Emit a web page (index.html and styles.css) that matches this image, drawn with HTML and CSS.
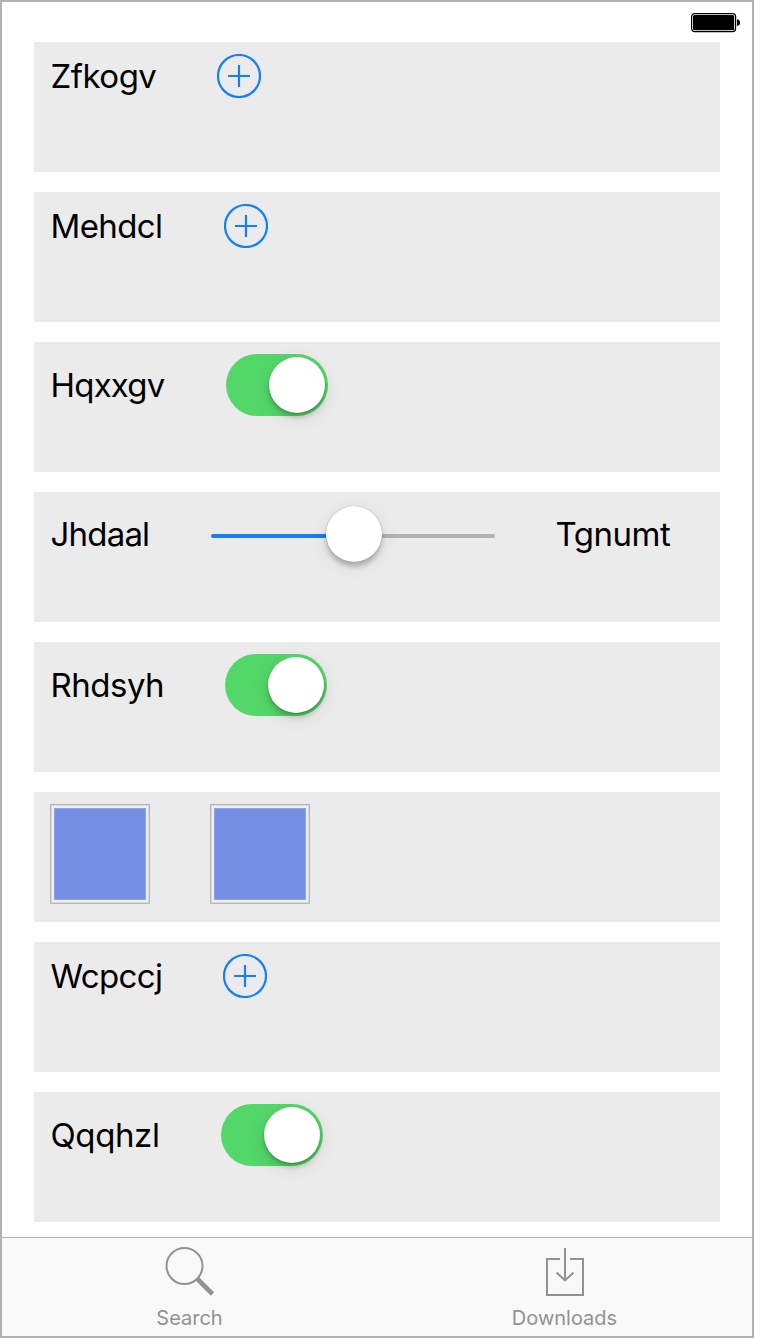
FILE: index.html
```html
<!DOCTYPE html>
<html lang="en">
<head>
<meta charset="utf-8">
<title>Search</title>
<link rel="stylesheet" href="styles.css">
</head>
<body>
<div class="phone">
  <header class="status">
    <svg class="battery" width="50" height="20" viewBox="0 0 50 20">
      <rect x="0.6" y="0.6" width="44" height="18" rx="3" fill="#fff" stroke="#000" stroke-width="1.2"/>
      <rect x="2" y="2" width="41.2" height="15.2" rx="1.5" fill="#000"/>
      <path d="M46 6.2Q49 6.5 49 9.6Q49 12.7 46 13Z" fill="#000"/>
    </svg>
  </header>
  <main class="rows">
    <section class="row"><div class="line"><span class="label w-zf">Zfkogv</span><svg class="plus" viewBox="0 0 44 44"><circle cx="22" cy="22" r="21"/><path d="M22 11V33M11 22H33"/></svg></div></section>
    <section class="row"><div class="line"><span class="label w-me">Mehdcl</span><svg class="plus" viewBox="0 0 44 44"><circle cx="22" cy="22" r="21"/><path d="M22 11V33M11 22H33"/></svg></div></section>
    <section class="row"><div class="line"><span class="label w-hq">Hqxxgv</span><div class="toggle"><div class="thumb"></div></div></div></section>
    <section class="row"><div class="line slider-line"><span class="label w-jh">Jhdaal</span><div class="slider"><div class="filled"></div><div class="thumb"></div><div class="rest"></div></div><span class="label w-tg">Tgnumt</span></div></section>
    <section class="row"><div class="line"><span class="label w-rh">Rhdsyh</span><div class="toggle"><div class="thumb"></div></div></div></section>
    <section class="row"><div class="line"><div class="swatch"></div><div class="swatch"></div></div></section>
    <section class="row"><div class="line"><span class="label w-wc">Wcpccj</span><svg class="plus" viewBox="0 0 44 44"><circle cx="22" cy="22" r="21"/><path d="M22 11V33M11 22H33"/></svg></div></section>
    <section class="row"><div class="line"><span class="label w-qq">Qqqhzl</span><div class="toggle"><div class="thumb"></div></div></div></section>
  </main>
  <nav class="tabs">
    <div class="tab">
      <svg class="icon" width="52" height="52" viewBox="0 0 52 52"><circle cx="20.5" cy="20" r="18"/><path d="M33.5 33L48.5 48" stroke-width="4.6"/></svg>
      <span class="caption search">Search</span>
    </div>
    <div class="tab">
      <svg class="icon" width="52" height="52" viewBox="0 0 52 52"><path d="M21 13H8V49H44V13H31M26 2V35M17.5 26.5L26 34.5L34.5 26.5"/></svg>
      <span class="caption downloads">Downloads</span>
    </div>
  </nav>
</div>
</body>
</html>
```
FILE: styles.css
```css
body { margin: 0; background: #fff; font-family: Inter, sans-serif; }
.phone { box-sizing: border-box; width: 754px; height: 1338px; border: 2px solid #b2b2b2; display: flex; flex-direction: column; }
.status { height: 40px; flex: none; box-sizing: border-box; padding: 11px 11px 0 0; display: flex; justify-content: flex-end; }
.battery { display: block; }
.rows { flex: 1; display: flex; flex-direction: column; gap: 20px; padding: 0 32px; }
.row { box-sizing: border-box; height: 130px; padding: 12px 16px; background: #ebebeb; }
.line { display: flex; align-items: center; gap: 60px; }
.slider-line { height: 60px; }
.label { flex: none; box-sizing: border-box; padding-left: 0.5px; font-size: 33px; line-height: 44px; white-space: nowrap; color: #000; }
.w-zf { width: 107px; letter-spacing: -0.5px; }
.w-me { width: 114px; letter-spacing: -0.6px; }
.w-hq { width: 116px; letter-spacing: -0.8px; }
.w-jh { width: 101px; letter-spacing: -0.8px; }
.w-tg { width: 116px; letter-spacing: -0.5px; }
.w-rh { width: 115px; letter-spacing: -0.5px; }
.w-wc { width: 113px; letter-spacing: -0.6px; }
.w-qq { width: 111px; letter-spacing: -0.4px; }
.plus { width: 44px; height: 44px; flex: none; display: block; fill: none; stroke: #157efb; stroke-width: 2.2; }
.toggle { box-sizing: border-box; width: 102px; height: 62px; padding: 3px; border-radius: 31px; background: #53d769; display: flex; justify-content: flex-end; }
.thumb { width: 56px; height: 56px; flex: none; border-radius: 50%; background: #fff; box-shadow: 0 5px 5px rgba(0,0,0,.15), 0 1px 2px rgba(0,0,0,.2), 0 4px 20px rgba(0,0,0,.1); }
.slider { width: 284px; display: flex; align-items: center; }
.slider .thumb { position: relative; z-index: 1; box-shadow: 0 0 1px rgba(0,0,0,.4), 0 5px 5px rgba(0,0,0,.22), 0 4px 20px rgba(0,0,0,.08); }
.filled, .rest { height: 4px; margin-top: 4px; }
.filled { width: 115px; background: #157efb; border-radius: 2px 0 0 2px; }
.rest { width: 113px; background: #b2b2b2; border-radius: 0 2px 2px 0; }
.swatch { box-sizing: border-box; width: 100px; height: 100px; border: 1.5px solid #b7b7b7; padding: 1px; background: #d8d8d8; display: flex; }
.swatch::before { content: ""; flex: 1; border: 2px solid #edf0fb; background: #758fe2; box-shadow: inset 0 0 0 1px #8da2eb; }
.tabs { height: 98px; flex: none; border-top: 1px solid #b2b2b2; background: #f9f9f9; display: flex; }
.tab { flex: 1; display: flex; flex-direction: column; align-items: center; padding-top: 8px; }
.icon { display: block; fill: none; stroke: #929292; stroke-width: 2; }
.caption { font-size: 20px; line-height: 24px; margin-top: 8px; color: #929292; white-space: nowrap; }
```
